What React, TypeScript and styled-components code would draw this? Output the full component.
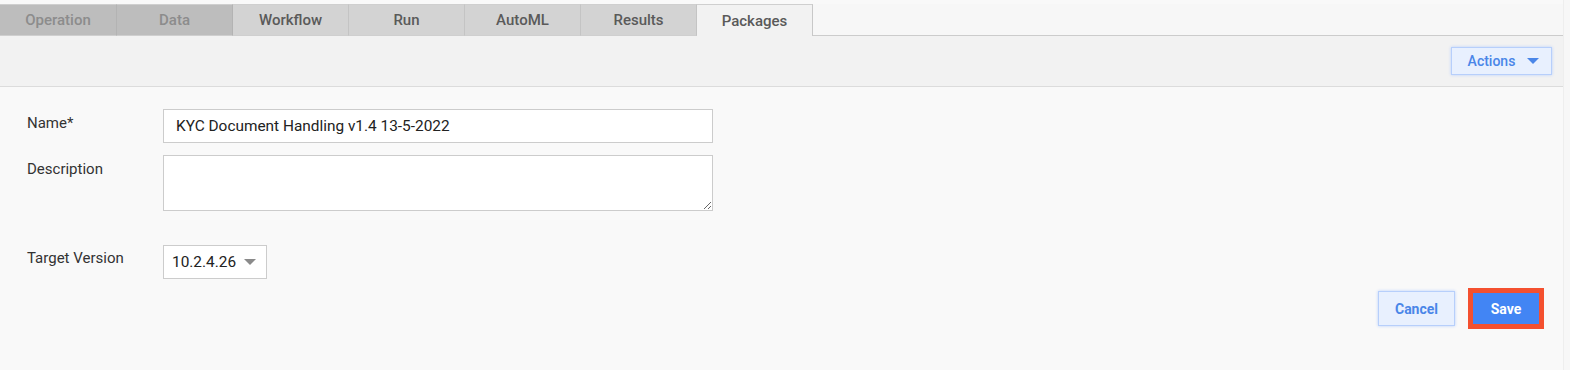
import styled, { createGlobalStyle } from 'styled-components';

const GlobalStyle = createGlobalStyle`
  html, body {
    margin: 0;
    padding: 0;
    background: #f7f7f7;
    font-family: Roboto, "Liberation Sans", sans-serif;
  }
`;

const tabs = [
  { label: 'Operation', state: 'disabled' },
  { label: 'Data', state: 'disabled' },
  { label: 'Workflow', state: 'normal' },
  { label: 'Run', state: 'normal' },
  { label: 'AutoML', state: 'normal' },
  { label: 'Results', state: 'normal' },
  { label: 'Packages', state: 'active' },
];

export default function App() {
  return (
    <>
      <GlobalStyle />
      <SPage>
        <STabBar>
          {tabs.map((t) => (
            <STab key={t.label} $state={t.state}>
              {t.label}
            </STab>
          ))}
          <STabFill />
        </STabBar>
        <SToolbar>
          <SActions>
            Actions
            <SCaret />
          </SActions>
        </SToolbar>
        <SForm>
          <SRow>
            <SLabel>Name*</SLabel>
            <SInput defaultValue="KYC Document Handling v1.4 13-5-2022" />
          </SRow>
          <SRow>
            <SLabel>Description</SLabel>
            <STextArea />
          </SRow>
          <SRow $top={22}>
            <SLabel $pad={4}>Target Version</SLabel>
            <SSelect>
              10.2.4.26
              <SCaret $color="#8a8a8a" />
            </SSelect>
          </SRow>
          <SFooter>
            <SCancel>Cancel</SCancel>
            <SSaveFrame>
              <SSave>Save</SSave>
            </SSaveFrame>
          </SFooter>
        </SForm>
      </SPage>
    </>
  );
}

const SPage = styled.div`
  width: 1564px;
  height: 370px;
  background: #f9f9f9;
  display: flex;
  flex-direction: column;
  box-sizing: border-box;
  border-right: 1px solid #eeeeee;
`;

const STabBar = styled.div`
  display: flex;
  margin-top: 4px;
  height: 32px;
  background: #f7f7f7;
`;

const STab = styled.div<{ $state: string }>`
  width: 116px;
  flex-shrink: 0;
  box-sizing: border-box;
  display: flex;
  align-items: center;
  justify-content: center;
  font-size: 15px;
  font-weight: 500;
  border-top: 1px solid #cfcfcf;
  border-right: 1px solid ${(p) => (p.$state === 'disabled' ? '#b3b3b3' : '#c4c4c4')};
  background: ${(p) =>
    p.$state === 'disabled' ? '#bdbdbd' : p.$state === 'active' ? '#f2f2f2' : '#d3d3d3'};
  color: ${(p) => (p.$state === 'disabled' ? '#8c8c8c' : '#5a5a5a')};
  border-bottom: ${(p) => (p.$state === 'active' ? 'none' : '1px solid #cfcfcf')};
  &:first-child {
    width: 117px;
  }
  ${(p) => p.$state === 'active' && 'border-right: 1px solid #c8c8c8;'}
`;

const STabFill = styled.div`
  flex: 1;
  border-bottom: 1px solid #cccccc;
`;

const SToolbar = styled.div`
  height: 51px;
  background: #f2f2f2;
  border-bottom: 1px solid #dcdcdc;
  display: flex;
  align-items: flex-start;
  justify-content: flex-end;
  padding: 11px 11px 0 0;
  box-sizing: border-box;
`;

const SActions = styled.button`
  width: 101px;
  height: 28px;
  display: flex;
  align-items: center;
  justify-content: center;
  gap: 12px;
  background: #e8f0fe;
  border: 1px solid #b7cffb;
  box-shadow: 0 0 3px #b7cffb;
  color: #4a86e8;
  font-family: Roboto, "Liberation Sans", sans-serif;
  font-size: 14px;
  font-weight: 500;
  padding: 0 0 0 4px;
`;

const SCaret = styled.span<{ $color?: string }>`
  width: 0;
  height: 0;
  border-left: 6px solid transparent;
  border-right: 6px solid transparent;
  border-top: 6px solid ${(p) => p.$color || '#4a86e8'};
`;

const SForm = styled.div`
  flex: 1;
  display: flex;
  flex-direction: column;
  padding: 22px 0 0 27px;
`;

const SRow = styled.div<{ $top?: number }>`
  display: flex;
  align-items: flex-start;
  margin-bottom: 12px;
  margin-top: ${(p) => p.$top || 0}px;
`;

const SLabel = styled.label<{ $pad?: number }>`
  width: 136px;
  font-size: 15px;
  font-weight: 400;
  color: #333;
  padding-top: ${(p) => p.$pad ?? 5}px;
`;

const SInput = styled.input`
  width: 550px;
  height: 34px;
  box-sizing: border-box;
  border: 1px solid #cccccc;
  background: #fff;
  padding: 0 12px;
  font-family: Roboto, "Liberation Sans", sans-serif;
  font-size: 15.4px;
  color: #222;
  outline: none;
`;

const STextArea = styled.textarea`
  width: 550px;
  height: 56px;
  box-sizing: border-box;
  border: 1px solid #cccccc;
  background: #fff;
  font-family: Roboto, "Liberation Sans", sans-serif;
  outline: none;
  resize: vertical;
`;

const SSelect = styled.div`
  width: 104px;
  height: 34px;
  box-sizing: border-box;
  border: 1px solid #cccccc;
  background: #fff;
  display: flex;
  align-items: center;
  justify-content: space-between;
  padding: 0 10px 0 8px;
  font-size: 15.4px;
  color: #222;
`;

const SFooter = styled.div`
  display: flex;
  justify-content: flex-end;
  align-items: center;
  gap: 13px;
  padding-right: 19px;
  margin-top: -3px;
`;

const SCancel = styled.button`
  width: 77px;
  height: 35px;
  background: #e8f0fe;
  border: 1px solid #b7cffb;
  box-shadow: 0 0 3px #b7cffb;
  color: #4a86e8;
  font-family: Roboto, "Liberation Sans", sans-serif;
  font-size: 14px;
  font-weight: 700;
`;

const SSaveFrame = styled.div`
  border: 5px solid #f4502f;
  display: flex;
`;

const SSave = styled.button`
  width: 66px;
  height: 31px;
  background: #4285f4;
  border: none;
  color: #fff;
  font-family: Roboto, "Liberation Sans", sans-serif;
  font-size: 14px;
  font-weight: 700;
`;
